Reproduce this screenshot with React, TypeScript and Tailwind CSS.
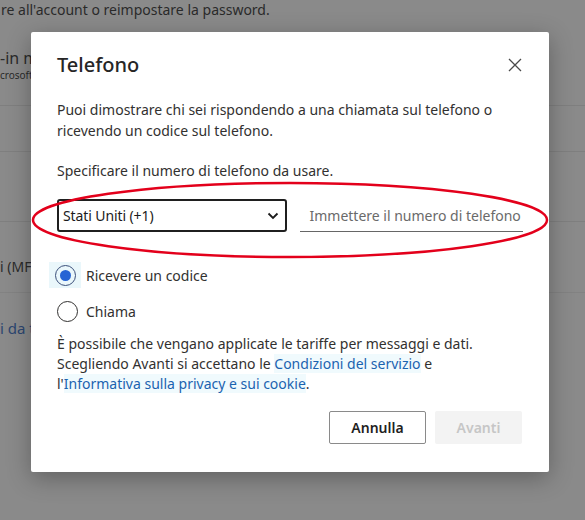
import React from "react";

export default function App() {
  const font = { fontFamily: '"Segoe UI", "Noto Sans", sans-serif' };
  return (
    <div
      className="relative w-[585px] h-[520px] overflow-hidden bg-[#8a8a8a] text-[#262626]"
      style={font}
    >
      {/* dimmed page behind */}
      <div className="flex flex-col">
        <div className="h-[106px] border-b border-[#7f7f7f]">
          <div className="text-[14px] leading-[20px] text-[#2a2a2a] pl-[1px]">
            re all'account o reimpostare la password.
          </div>
          <div className="mt-[28px] text-[16px] leading-[20px] text-[#2a2a2a]">-in m</div>
          <div className="text-[10px] leading-[14px] text-[#2a2a2a]">crosoft</div>
        </div>
        <div className="h-[46px] border-b border-[#7f7f7f]" />
        <div className="h-[70px] border-b border-[#7f7f7f]" />
        <div className="h-[71px] border-b border-[#828282] flex items-center pt-[18px]">
          <div className="text-[14px] text-[#2a2a2a]">i (MFA</div>
        </div>
        <div className="h-[64px] flex items-center pt-[6px]">
          <div className="text-[15px] text-[#2c4670]">i da t</div>
        </div>
      </div>

      {/* modal */}
      <div className="absolute left-[31px] top-[32px] w-[518px] h-[440px] bg-white rounded-[2px] shadow-[0_6px_24px_rgba(0,0,0,0.3)] px-[26px] pt-[19px] flex flex-col text-[#323130]">
        <div className="flex items-center justify-between">
          <div className="text-[20px] leading-[28px] font-medium text-[#262626]">Telefono</div>
          <svg width="14" height="14" viewBox="0 0 14 14" className="mr-[1px]">
            <path d="M1 1 L13 13 M13 1 L1 13" stroke="#4a4a4a" strokeWidth="1.3" />
          </svg>
        </div>
        <p className="mt-[20px] text-[14px] leading-[21px]">
          Puoi dimostrare chi sei rispondendo a una chiamata sul telefono o
          <br />
          ricevendo un codice sul telefono.
        </p>
        <p className="mt-[19px] text-[14px] leading-[21px]">Specificare il numero di telefono da usare.</p>
        <div className="mt-[18px] flex items-end gap-[13px]">
          <div className="w-[232px] h-[33px] border-2 border-[#1f1f1f] rounded-[3px] flex items-center justify-between pl-[4px] pr-[6px]">
            <span className="text-[14px] tracking-[-0.1px] text-[#1b1b1b] whitespace-nowrap">Stati Uniti (+1)</span>
            <svg width="12" height="8" viewBox="0 0 12 8">
              <path d="M1.5 1.5 L6 6 L10.5 1.5" stroke="#1b1b1b" strokeWidth="1.8" fill="none" />
            </svg>
          </div>
          <div className="w-[224px] h-[33px] border-b border-[#666] flex items-center pl-[9px]">
            <span className="text-[14px] text-[#6a6a6a] whitespace-nowrap">Immettere il numero di telefono</span>
          </div>
        </div>
        <div className="mt-[30px] flex items-center h-[26px] -ml-[8px]">
          <div className="w-[32px] h-[26px] bg-[#eaf7fb] flex items-center justify-center">
            <div className="w-[21px] h-[21px] rounded-full border-[1.5px] border-[#3b4f7a] flex items-center justify-center">
              <div className="w-[11px] h-[11px] rounded-full bg-[#2563d4]" />
            </div>
          </div>
          <span className="ml-[5px] text-[14px]">Ricevere un codice</span>
        </div>
        <div className="mt-[10px] flex items-center h-[26px]">
          <div className="w-[21px] h-[21px] rounded-full border border-[#323130]" />
          <span className="ml-[8px] text-[14px]">Chiama</span>
        </div>
        <p className="mt-[10px] text-[14px] leading-[20px]">
          È possibile che vengano applicate le tariffe per messaggi e dati.
          <br />
          Scegliendo Avanti si accettano le{" "}
          <span className="text-[#1b63b0] bg-[#f0fafd]">Condizioni del servizio</span> e
          <br />
          l'<span className="text-[#1b63b0] bg-[#f0fafd]">Informativa sulla privacy e sui cookie</span>.
        </p>
        <div className="mt-[17px] flex justify-end gap-[9px] pr-[1px]">
          <div className="w-[97px] h-[33px] border border-[#8a8a8a] rounded-[2px] flex items-center justify-center text-[14px] font-semibold text-[#1f1f1f]">
            Annulla
          </div>
          <div className="w-[87px] h-[33px] bg-[#f3f3f3] rounded-[2px] flex items-center justify-center text-[14px] font-semibold text-[#c6c6c6]">
            Avanti
          </div>
        </div>
      </div>

      {/* red annotation ellipse */}
      <svg className="absolute left-0 top-0 pointer-events-none" width="585" height="520">
        <ellipse cx="290" cy="220" rx="257" ry="37" fill="none" stroke="#e3001b" strokeWidth="2.5" />
      </svg>
    </div>
  );
}
